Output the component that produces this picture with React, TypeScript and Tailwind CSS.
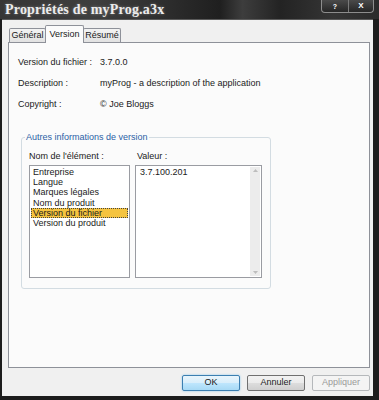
import React from "react";

const items = [
  "Entreprise",
  "Langue",
  "Marques légales",
  "Nom du produit",
  "Version du fichier",
  "Version du produit",
];

export default function App() {
  return (
    <div
      className="w-[379px] h-[400px] bg-[#1c1c1c] flex flex-col overflow-hidden text-[9px] text-[#1a1a1a]"
      style={{ fontFamily: '"Liberation Sans", Arial, sans-serif' }}
    >
      {/* Title bar */}
      <div className="h-[19px] shrink-0 flex items-start justify-between bg-[linear-gradient(90deg,#363636,#3e3e3e_25%,#2c2c2c_45%,#1f1f1f_58%,#3d3d3d_64%,#232323_74%,#353535_88%,#2b2b2b)]">
        <span
          className="ml-[5px] mt-[2px] text-[14px] leading-[15px] font-bold tracking-[0.2px] text-[#ececec] [text-shadow:0_0_3px_rgba(255,255,255,0.35)]"
          style={{ fontFamily: '"Liberation Serif", "Times New Roman", serif' }}
        >
          Propriétés de myProg.a3x
        </span>
        <div className="mr-[5px] flex h-[13px] w-[53px] rounded-b-[4px] border border-t-0 border-[#8d8d8d] bg-[linear-gradient(180deg,#4a4a4a,#262626)] overflow-hidden">
          <div className="flex-1 flex items-center justify-center border-r border-[#7a7a7a] text-[7px] font-bold text-white leading-none">
            ?
          </div>
          <div className="w-[24px] flex items-center justify-center text-[8px] font-bold text-white leading-none">
            X
          </div>
        </div>
      </div>

      {/* Client area */}
      <div className="ml-[2px] mr-[6px] mb-[4px] flex-1 bg-[#f0f0f0] border-t border-[#5a5a5a] flex flex-col pl-[6px] pr-[3px]">
        {/* Tabs */}
        <div className="h-[22px] pt-[5px] flex items-end pl-[1px] shrink-0">
          <div className="h-[14px] w-[37px] flex items-center justify-center border border-b-0 border-[#8e9199] rounded-t-[2px] bg-[linear-gradient(180deg,#f3f3f3,#e2e2e2)]">
            Général
          </div>
          <div className="relative z-10 -mb-px h-[18px] w-[39px] -ml-px flex items-start pt-[2px] justify-center border border-b-0 border-[#8e9199] rounded-t-[2px] bg-[#fbfbfb]">
            Version
          </div>
          <div className="h-[14px] w-[38px] -ml-px flex items-center justify-center border border-b-0 border-[#8e9199] rounded-t-[2px] bg-[linear-gradient(180deg,#f3f3f3,#e2e2e2)]">
            Résumé
          </div>
        </div>

        {/* Panel */}
        <div className="h-[326px] shrink-0 border border-[#8e9199] bg-[#fbfbfb] flex flex-col">
          <div className="pt-[14px] pl-[9px] flex flex-col gap-[10px] leading-[11px]">
            <div className="flex">
              <span className="w-[82px]">Version du fichier :</span>
              <span>3.7.0.0</span>
            </div>
            <div className="flex">
              <span className="w-[82px]">Description :</span>
              <span>myProg - a description of the application</span>
            </div>
            <div className="flex">
              <span className="w-[82px]">Copyright :</span>
              <span>© Joe Bloggs</span>
            </div>
          </div>

          <fieldset className="mt-[22px] ml-[12px] w-[250px] border border-[#d3dce2] rounded-[3px] pb-[10px]">
            <legend className="ml-[3px] px-[1px] leading-[11px] text-[#2b5fa6]">
              Autres informations de version
            </legend>
            <div className="pl-[7px]">
              <div className="pt-[8px] flex gap-[5px] leading-[11px]">
                <span className="w-[101px]">Nom de l'élément :</span>
                <span className="pl-[2px]">Valeur :</span>
              </div>
              <div className="mt-[3px] flex gap-[5px]">
                <div className="w-[101px] h-[113px] border border-[#9a9ca2] bg-white p-px">
                  {items.map((it) => (
                    <div
                      key={it}
                      className={
                        it === "Version du fichier"
                          ? "h-[10.2px] leading-[9px] pl-[1px] bg-[#f5c440] border border-dotted border-[#444]"
                          : "h-[10.2px] leading-[10.2px] pl-[2px]"
                      }
                    >
                      {it}
                    </div>
                  ))}
                </div>
                <div className="w-[127px] h-[113px] border border-[#9a9ca2] bg-white flex">
                  <div className="flex-1 pl-[4px] pt-[1px] leading-[10.2px]">3.7.100.201</div>
                  <div className="w-[10px] mr-px my-px bg-[#ececec] flex flex-col justify-between items-center py-[2px]">
                    <svg width="5" height="3" viewBox="0 0 5 3">
                      <path d="M0 3 L2.5 0 L5 3 Z" fill="#bdbdbd" />
                    </svg>
                    <svg width="5" height="3" viewBox="0 0 5 3">
                      <path d="M0 0 L2.5 3 L5 0 Z" fill="#bdbdbd" />
                    </svg>
                  </div>
                </div>
              </div>
            </div>
          </fieldset>
        </div>

        {/* Buttons */}
        <div className="mt-[7px] h-[16px] shrink-0 flex justify-end gap-[7px]">
          <div className="w-[58px] h-[16px] flex items-center justify-center rounded-[2px] border border-[#3c7fb1] bg-[linear-gradient(180deg,#e9f5fc_0%,#d8eefb_50%,#bee6fd_51%,#a7d9f5_100%)] shadow-[0_0_2px_#7ec3eb]">
            OK
          </div>
          <div className="w-[58px] h-[16px] flex items-center justify-center rounded-[2px] border border-[#707070] bg-[linear-gradient(180deg,#f2f2f2_0%,#ebebeb_50%,#dddddd_51%,#cfcfcf_100%)]">
            Annuler
          </div>
          <div className="w-[58px] h-[16px] flex items-center justify-center rounded-[2px] border border-[#b5b8bb] bg-[#f4f4f4] text-[#9a9a9a]">
            Appliquer
          </div>
        </div>
      </div>
    </div>
  );
}
